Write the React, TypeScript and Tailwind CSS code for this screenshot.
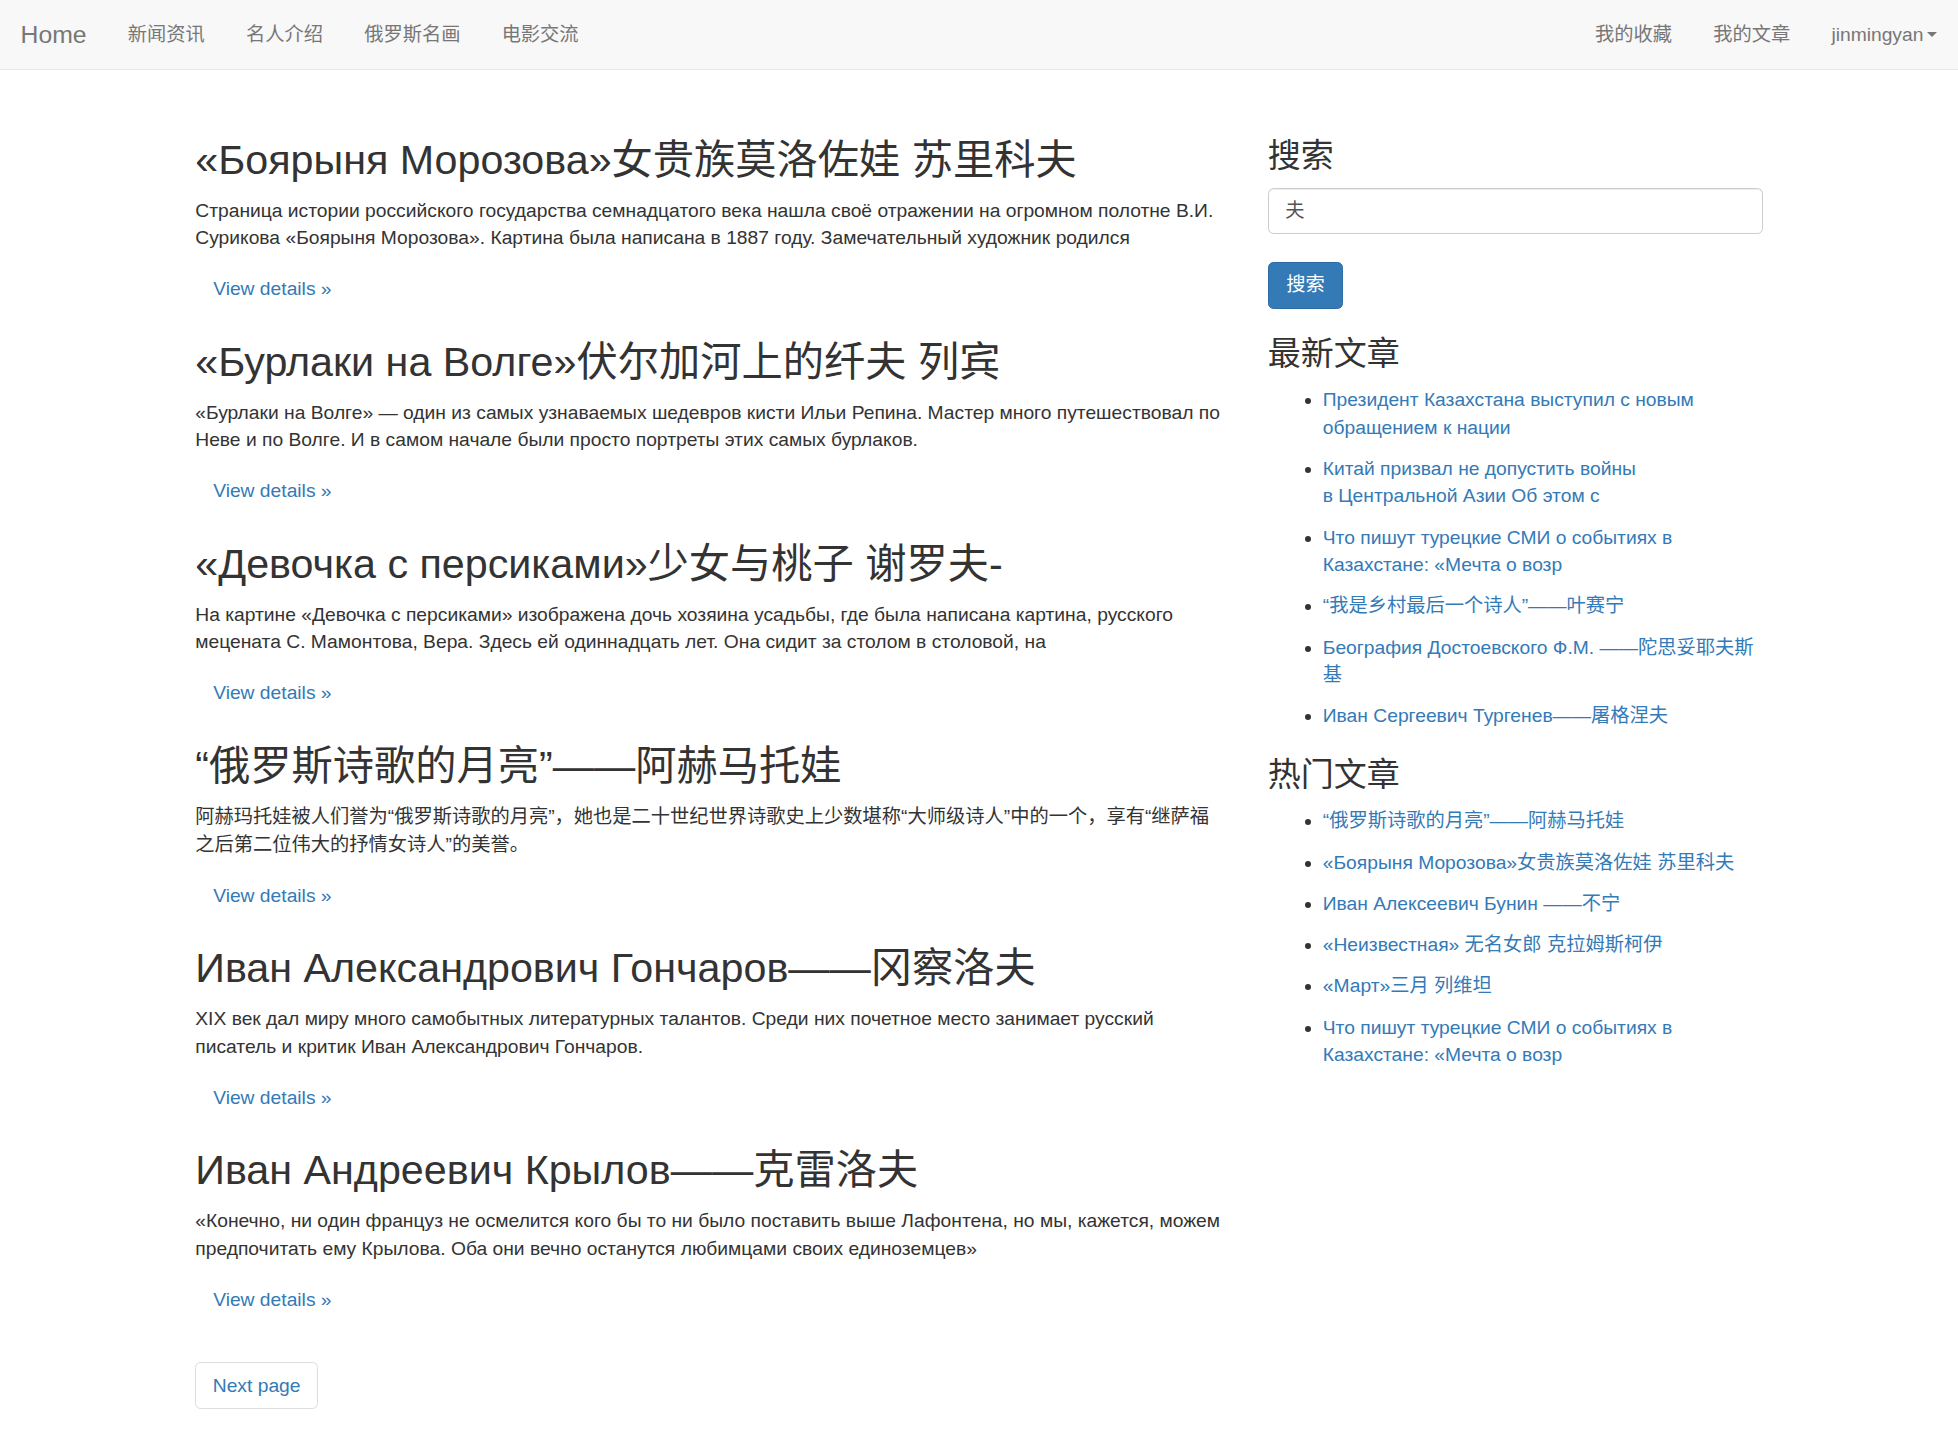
import React from "react";

const articles = [
  {
    title: "«Боярыня Морозова»女贵族莫洛佐娃 苏里科夫",
    body: "Страница истории российского государства семнадцатого века нашла своё отражении на огромном полотне В.И. Сурикова «Боярыня Морозова». Картина была написана в 1887 году. Замечательный художник родился",
  },
  {
    title: "«Бурлаки на Волге»伏尔加河上的纤夫 列宾",
    body: "«Бурлаки на Волге» — один из самых узнаваемых шедевров кисти Ильи Репина. Мастер много путешествовал по Неве и по Волге. И в самом начале были просто портреты этих самых бурлаков.",
  },
  {
    title: "«Девочка с персиками»少女与桃子 谢罗夫-",
    body: "На картине «Девочка с персиками» изображена дочь хозяина усадьбы, где была написана картина, русского мецената С. Мамонтова, Вера. Здесь ей одиннадцать лет. Она сидит за столом в столовой, на",
  },
  {
    title: "“俄罗斯诗歌的月亮”——阿赫马托娃",
    body: "阿赫玛托娃被人们誉为“俄罗斯诗歌的月亮”，她也是二十世纪世界诗歌史上少数堪称“大师级诗人”中的一个，享有“继萨福之后第二位伟大的抒情女诗人”的美誉。",
  },
  {
    title: "Иван Александрович Гончаров——冈察洛夫",
    body: "XIX век дал миру много самобытных литературных талантов. Среди них почетное место занимает русский писатель и критик Иван Александрович Гончаров.",
  },
  {
    title: "Иван Андреевич Крылов——克雷洛夫",
    body: "«Конечно, ни один француз не осмелится кого бы то ни было поставить выше Лафонтена, но мы, кажется, можем предпочитать ему Крылова. Оба они вечно останутся любимцами своих единоземцев»",
  },
];

const latest: React.ReactNode[] = [
  "Президент Казахстана выступил с новым обращением к нации",
  <>
    Китай призвал не допустить войны
    <br />в Центральной Азии Об этом с
  </>,
  "Что пишут турецкие СМИ о событиях в Казахстане: «Мечта о возр",
  "“我是乡村最后一个诗人”——叶赛宁",
  "Беография Достоевского Ф.М. ——陀思妥耶夫斯基",
  "Иван Сергеевич Тургенев——屠格涅夫",
];

const popular: React.ReactNode[] = [
  "“俄罗斯诗歌的月亮”——阿赫马托娃",
  "«Боярыня Морозова»女贵族莫洛佐娃 苏里科夫",
  "Иван Алексеевич Бунин ——不宁",
  "«Неизвестная» 无名女郎 克拉姆斯柯伊",
  "«Март»三月 列维坦",
  "Что пишут турецкие СМИ о событиях в Казахстане: «Мечта о возр",
];

function NavLink({ children }: { children: React.ReactNode }) {
  return (
    <a className="flex items-center px-[20.6px] text-[#777] cursor-pointer">
      {children}
    </a>
  );
}

function LinkList({ items }: { items: React.ReactNode[] }) {
  return (
    <ul className="list-disc pl-[55px] mb-[13.75px]">
      {items.map((it, i) => (
        <li key={i} className="mb-[13.75px] text-[#333]">
          <a className="text-[#337ab7] cursor-pointer">{it}</a>
        </li>
      ))}
    </ul>
  );
}

export default function App() {
  return (
    <div className="min-h-[1444px] bg-white text-[#333] font-['Liberation_Sans','Noto_Sans_CJK_SC',sans-serif] text-[19.25px] leading-[27.5px]">
      <nav className="h-[70px] bg-[#f8f8f8] border-b border-[#e7e7e7] flex justify-between">
        <div className="flex">
          <a className="flex items-center px-[20.6px] text-[24.75px] text-[#777] cursor-pointer">
            Home
          </a>
          <NavLink>新闻资讯</NavLink>
          <NavLink>名人介绍</NavLink>
          <NavLink>俄罗斯名画</NavLink>
          <NavLink>电影交流</NavLink>
        </div>
        <div className="flex">
          <NavLink>我的收藏</NavLink>
          <NavLink>我的文章</NavLink>
          <NavLink>
            jinmingyan
            <span className="inline-block w-0 h-0 ml-[4px] border-t-[5.5px] border-t-[#777] border-x-[5.5px] border-x-transparent" />
          </NavLink>
        </div>
      </nav>

      <div className="w-[1567.5px] mx-auto flex gap-[41.25px]">
        <main className="w-[1031.25px] pt-[67.5px]">
          <div className="flex flex-col gap-[27.5px]">
            {articles.map((a, i) => (
              <article key={i}>
                <h2 className="text-[41.25px] leading-[45.4px] font-normal text-[#333] mb-[13.75px]">
                  {a.title}
                </h2>
                <p className="mb-[13.75px]">{a.body}</p>
                <a className="inline-flex items-center h-[46.75px] px-[17.9px] text-[#337ab7] cursor-pointer">
                  View details »
                </a>
              </article>
            ))}
          </div>
          <div className="mt-[39.5px]">
            <a className="inline-flex items-center h-[46.75px] px-[16.5px] border border-[#ddd] rounded-[5.5px] text-[#337ab7] bg-white cursor-pointer">
              Next page
            </a>
          </div>
        </main>

        <aside className="w-[495px] pt-[67.5px]">
          <h3 className="text-[33px] leading-[36.3px] font-normal text-[#333] mb-[13.75px]">
            搜索
          </h3>
          <div className="h-[46.75px] flex items-center px-[16.5px] border border-[#ccc] rounded-[5.5px] shadow-[inset_0_1px_1px_rgba(0,0,0,0.075)] text-[#555] bg-white">
            夫
          </div>
          <div className="mt-[27.5px]">
            <button className="h-[46.75px] px-[17.5px] bg-[#337ab7] border border-[#2e6da4] rounded-[5.5px] text-white">
              搜索
            </button>
          </div>
          <h3 className="mt-[27.5px] text-[33px] leading-[36.3px] font-normal text-[#333] mb-[13.75px]">
            最新文章
          </h3>
          <LinkList items={latest} />
          <h3 className="mt-[27.5px] text-[33px] leading-[36.3px] font-normal text-[#333] mb-[13.75px]">
            热门文章
          </h3>
          <LinkList items={popular} />
        </aside>
      </div>
    </div>
  );
}
